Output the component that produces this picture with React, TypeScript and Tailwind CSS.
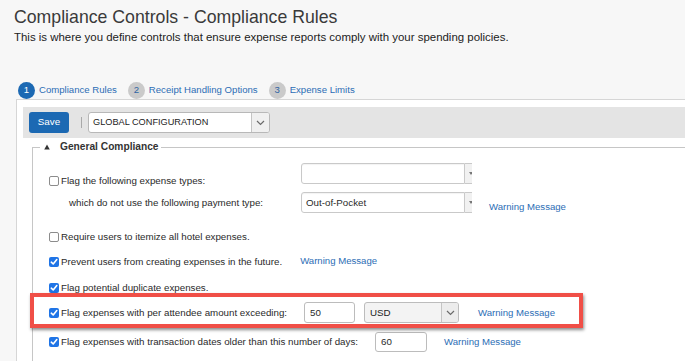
import React from 'react';

const link = 'text-[#2c6db5] text-[9.6px] leading-[12px] whitespace-nowrap';

function Check({ on }: { on?: boolean }) {
  if (on) {
    return (
      <span className="flex h-[10px] w-[10px] shrink-0 items-center justify-center rounded-[2px] bg-[#1f74e6]">
        <svg width="8" height="8" viewBox="0 0 8 8" fill="none" stroke="white" strokeWidth="1.6" strokeLinecap="round" strokeLinejoin="round">
          <path d="M1.3 4.2 3.2 6 6.8 1.6" />
        </svg>
      </span>
    );
  }
  return <span className="h-[10px] w-[10px] shrink-0 rounded-[2px] border border-[#8c8c8c] bg-white" />;
}

function Chevron() {
  return (
    <svg width="9" height="6" viewBox="0 0 9 6" fill="none" stroke="#6b6b6b" strokeWidth="1.2">
      <path d="M1 1l3.5 3.5L8 1" />
    </svg>
  );
}

function Option({ on, children }: { on?: boolean; children: React.ReactNode }) {
  return (
    <div className="flex items-center gap-[2px] whitespace-nowrap">
      <Check on={on} />
      <span>{children}</span>
    </div>
  );
}

// select2 style box, clipped on the right like in the screenshot
function ClippedSelect({ value }: { value?: string }) {
  return (
    <div className="flex h-[21px] w-[171px] overflow-hidden">
      <div className="flex w-[164px] shrink-0 items-center rounded-l-[3px] border border-[#c9c9c9] bg-white pl-[4px] shadow-[inset_0_1px_1px_rgba(0,0,0,0.05)]">
        {value}
      </div>
      <div className="relative w-[20px] shrink-0 border-y border-r border-[#c9c9c9] bg-[#f1f1f1]">
        <span className="absolute left-[4px] top-[8px] h-0 w-0 border-x-[2px] border-t-[3px] border-x-transparent border-t-[#777]" />
      </div>
    </div>
  );
}

export default function App() {
  return (
    <div className="relative h-[361px] w-[685px] overflow-hidden bg-[#f7f7f7] font-['Liberation_Sans',Helvetica,Arial,sans-serif] text-[#333]">
      {/* header */}
      <div className="pl-[14px] pt-[7px]">
        <h1 className="text-[17.7px] leading-[20px] text-[#3a3a3a]">Compliance Controls - Compliance Rules</h1>
        <p className="mt-[4px] text-[11.45px] leading-[13px] text-[#222]">
          This is where you define controls that ensure expense reports comply with your spending policies.
        </p>
      </div>

      {/* steps */}
      <div className="ml-[18px] mt-[38px] flex h-[17px] items-center text-[9.6px] text-[#2c6db5]">
        <span className="flex h-[17px] w-[17px] items-center justify-center rounded-full bg-[#1c69b3] text-white">1</span>
        <span className="ml-[4px]">Compliance Rules</span>
        <span className="ml-[11px] flex h-[17px] w-[17px] items-center justify-center rounded-full bg-[#cacaca] text-[#2f64a3]">2</span>
        <span className="ml-[4px]">Receipt Handling Options</span>
        <span className="ml-[11px] flex h-[17px] w-[17px] items-center justify-center rounded-full bg-[#cacaca] text-[#2f64a3]">3</span>
        <span className="ml-[4px]">Expense Limits</span>
      </div>

      {/* panel */}
      <div className="ml-[16px] h-[270px] border-l border-t border-[#d6d6d6] bg-white">
        <div className="ml-[6px] mt-[7px] flex h-[31px] items-center bg-[#e4e4e4] pl-[6px]">
          <button className="flex h-[21px] w-[40px] items-center justify-center rounded-[3px] bg-[#1c69b3] text-[9.8px] text-white">
            Save
          </button>
          <span className="ml-[12px] h-[11px] w-px bg-[#a9a9a9]" />
          <div className="ml-[6px] flex h-[21px] w-[182px] items-stretch overflow-hidden rounded-[3px] border border-[#b8b8b8] bg-white">
            <span className="flex flex-1 items-center pl-[4px] text-[9.2px] text-[#222]">GLOBAL CONFIGURATION</span>
            <span className="flex w-[18px] items-center justify-center border-l border-[#c4c4c4] bg-[#f0f0f0]">
              <Chevron />
            </span>
          </div>
        </div>

        <fieldset className="ml-[15px] mt-[3px] h-[230px] border-l border-t border-[#c6c6c6]">
          <legend className="ml-[7px] flex items-center pl-[4px] pr-[2px] leading-[12px]">
            <svg width="6" height="6" viewBox="0 0 6 6">
              <path d="M3 0.5 5.8 5.5H0.2Z" fill="#333" />
            </svg>
            <span className="ml-[10px] text-[10.2px] font-bold text-[#333]">General Compliance</span>
          </legend>

          <div className="pl-[16px] text-[9.75px] leading-[12px] text-[#2a2a2a]">
            <div className="mt-[10px] flex h-[21px]">
              <div className="mt-[12px] w-[252px]">
                <Option>Flag the following expense types:</Option>
              </div>
              <ClippedSelect />
            </div>

            <div className="mt-[8px] flex h-[21px] items-center">
              <div className="w-[252px] whitespace-nowrap pl-[20px]">which do not use the following payment type:</div>
              <ClippedSelect value="Out-of-Pocket" />
              <span className={`ml-[17px] self-end ${link}`}>Warning Message</span>
            </div>

            <div className="mt-[14px] flex h-[20px] items-center">
              <Option>Require users to itemize all hotel expenses.</Option>
            </div>

            <div className="mt-[5px] flex h-[20px] items-center">
              <Option on>Prevent users from creating expenses in the future.</Option>
              <span className={`ml-[18px] mb-[2px] ${link}`}>Warning Message</span>
            </div>

            <div className="mt-[6px] flex h-[20px] items-center">
              <Option on>Flag potential duplicate expenses.</Option>
            </div>

            <div className="mt-[4px] flex h-[21px] items-center">
              <Option on>Flag expenses with per attendee amount exceeding:</Option>
              <div className="ml-[17px] flex h-[21px] w-[51px] items-center rounded-[3px] border border-[#bcbcbc] bg-white pl-[5px]">50</div>
              <div className="ml-[9px] flex h-[21px] w-[95px] items-stretch overflow-hidden rounded-[3px] border border-[#bcbcbc] bg-[#f3f3f3]">
                <span className="flex flex-1 items-center pl-[5px] text-[#222]">USD</span>
                <span className="flex w-[17px] items-center justify-center border-l border-[#c4c4c4] bg-[#ececec]">
                  <Chevron />
                </span>
              </div>
              <span className={`ml-[19px] ${link}`}>Warning Message</span>
            </div>

            <div className="mt-[9px] flex h-[20px] items-center">
              <Option on>Flag expenses with transaction dates older than this number of days:</Option>
              <div className="ml-[17px] flex h-[20px] w-[52px] items-center self-start rounded-[3px] border border-[#bcbcbc] bg-white pl-[5px]">60</div>
              <span className={`ml-[17px] ${link}`}>Warning Message</span>
            </div>
          </div>
        </fieldset>
      </div>

      {/* highlight annotation */}
      <div className="pointer-events-none absolute left-[30px] top-[293px] h-[35px] w-[553px] border-4 border-[#f04f47] shadow-[1px_2px_3px_rgba(0,0,0,0.45)]" />
    </div>
  );
}
